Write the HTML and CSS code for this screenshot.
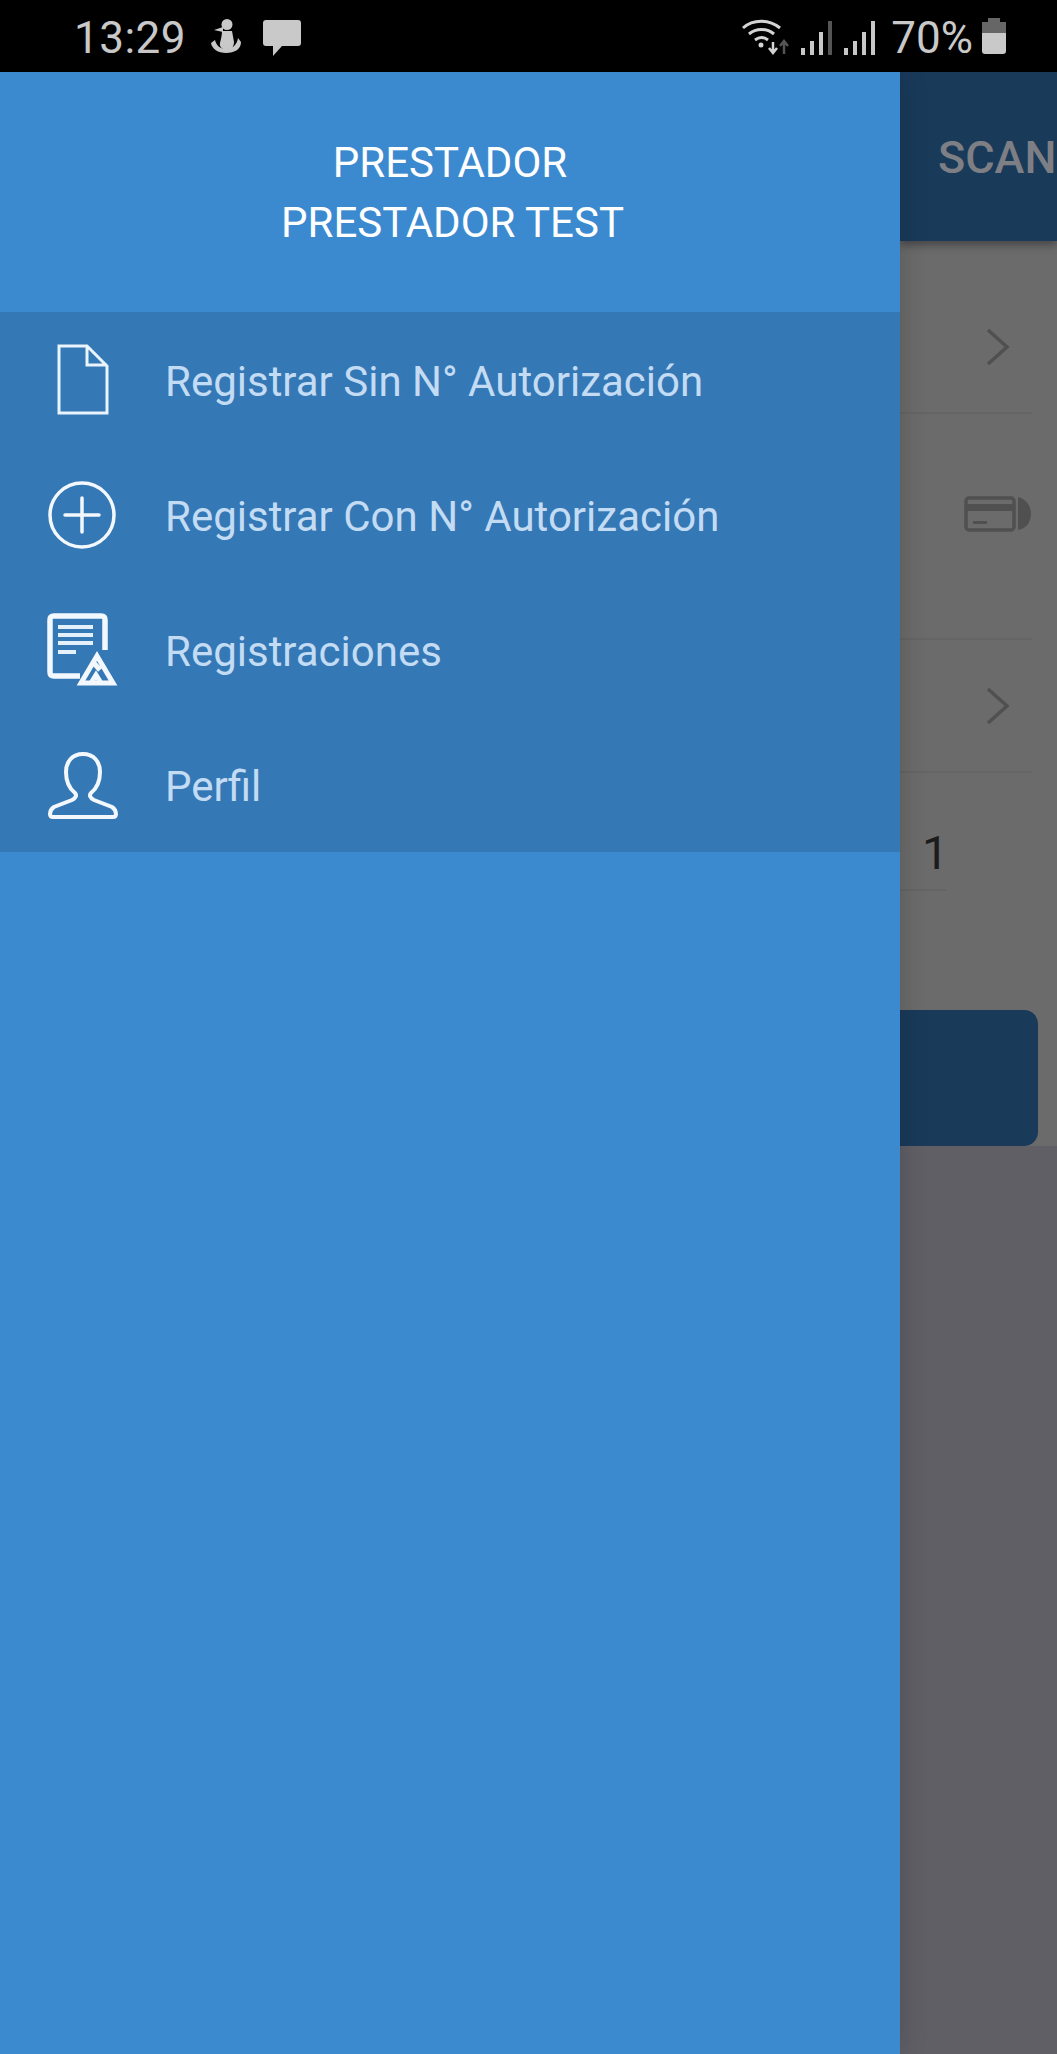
FILE: index.html

```html
<!DOCTYPE html>
<html lang="es">
<head>
  <meta charset="UTF-8" />
  <meta name="viewport" content="width=device-width, initial-scale=1.0"/>
  <title>Prestador</title>
  <link rel="stylesheet" href="styles.css">
</head>
<body>

  <div class="status-bar">
    <div class="status-left">
      <span class="status-time">13:29</span>
      <svg class="icon-runner" width="32" height="36" viewBox="0 0 32 36">
        <circle cx="17" cy="6.5" r="5.5" fill="#c9c9c9"/>
        <path d="M4 12 L13 9 L13 14 Z" fill="#c9c9c9"/>
        <path d="M12 13 H22 L24 24 C24 29 21 32 17 32 C13 32 9 29 10 25 C11 21 12 17 12 13 Z" fill="#c9c9c9"/>
        <path d="M1 25 L5 22 C6 27 10 31 16 31 C22 31 27 27 28 20 L31 24 C31 31 25 35 16 35 C8 35 2 31 1 25 Z" fill="#c9c9c9"/>
      </svg>
      <svg class="icon-message" width="38" height="38" viewBox="0 0 38 38">
        <path d="M3 1 H35 C37 1 38 2 38 4 V24 C38 26 37 27 35 27 H19 L10 37 V27 H3 C1 27 0 26 0 24 V4 C0 2 1 1 3 1 Z" fill="#c9c9c9"/>
      </svg>
    </div>
    <div class="status-right">
      <svg class="icon-wifi" width="48" height="36" viewBox="0 0 48 36">
        <path d="M2 9 C12 0 28 0 39 9" fill="none" stroke="#d4d4d4" stroke-width="3"/>
        <path d="M8 15 C15 9 26 9 33 15" fill="none" stroke="#d4d4d4" stroke-width="3"/>
        <path d="M14 21 C18 18 23 18 27 21" fill="none" stroke="#d4d4d4" stroke-width="3"/>
        <circle cx="20" cy="26" r="2.5" fill="#d4d4d4"/>
        <path d="M32 23 V34 M28 29 L32 34 L36 29" fill="none" stroke="#d4d4d4" stroke-width="2.5"/>
        <path d="M43 35 V22 M39 27 L43 22 L47 27" fill="none" stroke="#555" stroke-width="2.5"/>
      </svg>
      <svg class="icon-signal signal-first" width="32" height="34" viewBox="0 0 32 34">
        <rect x="0" y="27" width="4" height="7" fill="#c9c9c9"/>
        <rect x="9" y="20" width="4" height="14" fill="#c9c9c9"/>
        <rect x="18" y="11" width="4" height="23" fill="#c9c9c9"/>
        <rect x="27" y="0" width="4" height="34" fill="#555"/>
      </svg>
      <svg class="icon-signal" width="32" height="34" viewBox="0 0 32 34">
        <rect x="0" y="27" width="4" height="7" fill="#c9c9c9"/>
        <rect x="9" y="20" width="4" height="14" fill="#c9c9c9"/>
        <rect x="18" y="11" width="4" height="23" fill="#c9c9c9"/>
        <rect x="27" y="0" width="4" height="34" fill="#c9c9c9"/>
      </svg>
      <span class="status-battery-text">70%</span>
      <svg class="icon-battery" width="24" height="36" viewBox="0 0 24 36">
        <rect x="6" y="0" width="12" height="5" fill="#666"/>
        <rect x="0" y="4" width="24" height="11" fill="#666"/>
        <path d="M0 15 H24 V33 C24 35 23 36 21 36 H3 C1 36 0 35 0 33 Z" fill="#c9c9c9"/>
      </svg>
    </div>
  </div>

  <div class="screen">
    <div class="drawer">
      <div class="drawer-header">
        <div>PRESTADOR</div>
        <div class="header-name">PRESTADOR TEST</div>
      </div>
      <ul class="menu">
        <li class="menu-item">
          <svg class="menu-icon" width="80" height="80" viewBox="0 0 80 80">
            <path d="M17 6 H45 L65 26 V73 H17 Z M45 6 V25 H65" fill="none" stroke="#eaf4fc" stroke-width="3"/>
          </svg>
          <span>Registrar Sin N° Autorización</span>
        </li>
        <li class="menu-item">
          <svg class="menu-icon" width="80" height="80" viewBox="0 0 80 80">
            <circle cx="40" cy="40" r="32" fill="none" stroke="#f2f8fd" stroke-width="3.5"/>
            <path d="M23 40 H57 M40 23 V57" fill="none" stroke="#f2f8fd" stroke-width="3.5" stroke-linecap="round"/>
          </svg>
          <span>Registrar Con N° Autorización</span>
        </li>
        <li class="menu-item">
          <svg class="menu-icon" width="80" height="80" viewBox="0 0 80 80">
            <path d="M38 66 H12 C9 66 8 65 8 62 V10 C8 7 9 6 12 6 H59 C62 6 63 7 63 10 V40" fill="none" stroke="#f2f8fd" stroke-width="5.5"/>
            <path d="M16 17 H51 M16 25 H51 M16 33 H51 M16 42 H34" fill="none" stroke="#e4f0fa" stroke-width="4"/>
            <path d="M55 46 L71 73 H39 Z M49 73 L54 65 L59 73 M58 60 L51 52" fill="none" stroke="#f2f8fd" stroke-width="5"/>
          </svg>
          <span>Registraciones</span>
        </li>
        <li class="menu-item">
          <svg class="menu-icon" width="80" height="80" viewBox="0 0 80 80">
            <path d="M41 9 C30 9 24 17 24 27 C24 37 28 44 33 48 C35 50 34 53 30 55 L12 62 C9 64 8 66 8 69 C8 71 9 72 11 72 H71 C73 72 74 71 74 69 C74 66 73 64 70 62 L52 55 C48 53 47 50 49 48 C54 44 58 37 58 27 C58 17 52 9 41 9 Z" fill="none" stroke="#f2f8fd" stroke-width="4"/>
          </svg>
          <span>Perfil</span>
        </li>
      </ul>
    </div>

    <!-- lo que queda detras del menu, oscurecido -->
    <div class="behind">
      <div class="behind-bar">SCAN</div>
      <div class="behind-content">
        <div class="behind-row row-first">
          <svg width="24" height="38" viewBox="0 0 24 38">
            <path d="M2 2 L21 19 L2 36" fill="none" stroke="#505050" stroke-width="3.5"/>
          </svg>
        </div>
        <div class="behind-row row-card">
          <svg width="68" height="44" viewBox="0 0 68 44">
            <rect x="2" y="9" width="48" height="32" rx="3" fill="none" stroke="#505050" stroke-width="3.5"/>
            <rect x="2" y="15" width="48" height="7" fill="#505050"/>
            <rect x="9" y="32" width="14" height="3" fill="#505050"/>
            <path d="M38 1 L54 8 C62 10 67 17 67 25 C67 33 62 40 54 41 V8 Z" fill="#505050"/>
          </svg>
        </div>
        <div class="behind-row row-third">
          <svg width="24" height="38" viewBox="0 0 24 38">
            <path d="M2 2 L21 19 L2 36" fill="none" stroke="#505050" stroke-width="3.5"/>
          </svg>
        </div>
        <div class="behind-qty">1</div>
        <div class="behind-button"></div>
      </div>
      <div class="behind-empty"></div>
    </div>
  </div>

</body>
</html>
```

FILE: styles.css

```css
html, body {
  margin: 0;
  padding: 0;
  height: 2054px;
  overflow: hidden;
  background-color: #605f66;
  font-family: 'Roboto', sans-serif;
}

.status-bar {
  height: 72px;
  background-color: #000;
  color: #c9c9c9;
  display: flex;
  justify-content: space-between;
  align-items: center;
  padding: 0 51px 0 74px;
  font-size: 44px;
}

.status-left,
.status-right {
  display: flex;
  align-items: center;
}

.status-time,
.status-battery-text {
  padding-top: 4px;
}

.status-time {
  letter-spacing: 0.5px;
}

.status-left svg {
  display: block;
}

.icon-runner {
  margin-left: 24px;
}

.icon-message {
  margin-left: 21px;
  margin-top: 4px;
}

.icon-wifi {
  margin-top: 2px;
}

.icon-signal {
  margin-left: 11px;
  margin-top: 4px;
}

.signal-first {
  margin-left: 12px;
}

.status-battery-text {
  margin-left: 15px;
}

.icon-battery {
  margin-left: 9px;
}

.screen {
  display: flex;
  height: 1982px;
}

.drawer {
  width: 900px;
  flex-shrink: 0;
  background-color: #3b8ad0;
  position: relative;
  z-index: 2;
  box-shadow: 0 0 26px rgba(0,0,0,0.18);
}

.drawer-header {
  height: 240px;
  box-sizing: border-box;
  padding-top: 2px;
  color: #fff;
  font-size: 42px;
  line-height: 60px;
  text-align: center;
  display: flex;
  flex-direction: column;
  justify-content: center;
}

.header-name {
  padding-left: 5px;
}

.menu {
  list-style: none;
  margin: 0;
  padding: 0;
  background-color: #3578b6;
}

.menu-item {
  height: 135px;
  display: flex;
  align-items: center;
  color: #c3dcf3;
  font-size: 42px;
}

.menu-item span {
  padding-top: 3px;
}

.menu-icon {
  margin-left: 42px;
  margin-right: 43px;
  flex-shrink: 0;
}

.behind {
  flex: 1;
  display: flex;
  flex-direction: column;
  min-width: 0;
}

.behind-bar {
  height: 169px;
  background-color: #1a3a5a;
  color: #7d7f85;
  font-size: 45px;
  font-weight: 500;
  line-height: 172px;
  padding-left: 38px;
  white-space: nowrap;
  overflow: hidden;
  box-shadow: 0 4px 8px rgba(0,0,0,0.35);
  position: relative;
}

.behind-content {
  height: 905px;
  background-color: #6b6b6b;
  color: #1c1c1c;
}

.behind-row {
  display: flex;
  align-items: center;
  justify-content: flex-end;
  margin-right: 25px;
  border-bottom: 2px solid #656565;
  box-sizing: border-box;
}

.row-first {
  height: 173px;
  padding-right: 22px;
  padding-top: 41px;
}

.row-card {
  height: 226px;
  padding-bottom: 30px;
}

.row-third {
  height: 133px;
  padding-right: 22px;
}

.behind-qty {
  width: 46px;
  height: 118px;
  box-sizing: border-box;
  border-bottom: 2px solid #656565;
  font-size: 47px;
  line-height: 52px;
  padding-top: 54px;
  padding-left: 22px;
}

.behind-button {
  margin-top: 119px;
  width: 138px;
  height: 136px;
  background-color: #1a3a5a;
  border-radius: 0 14px 14px 0;
}

.behind-empty {
  flex: 1;
  background-color: #605f66;
}
```
